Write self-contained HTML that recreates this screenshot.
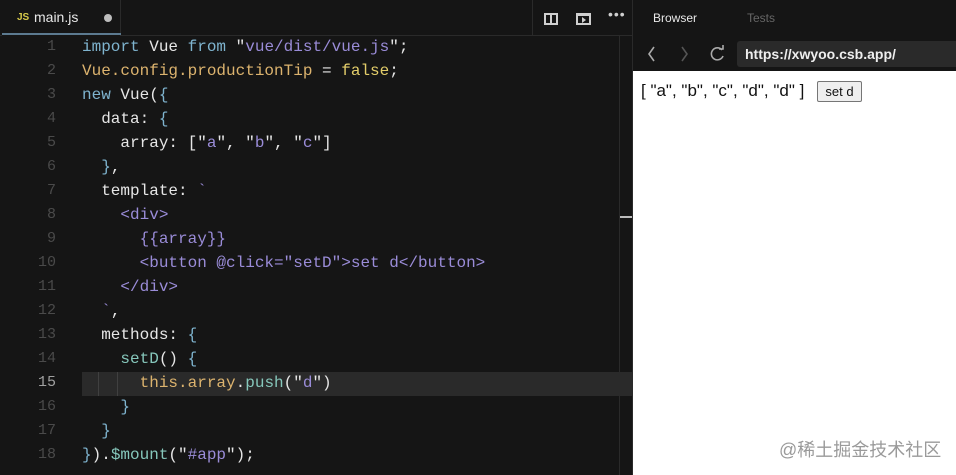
<!DOCTYPE html>
<html><head><meta charset="utf-8"><style>
*{margin:0;padding:0;box-sizing:border-box}
html,body{width:956px;height:475px;overflow:hidden}
body{background:#151515;position:relative;font-family:"Liberation Sans",sans-serif}
.abs{position:absolute}
.code{position:absolute;left:0;top:35px;font-family:"Liberation Mono","DejaVu Sans Mono",monospace;font-size:16px;line-height:24px;color:#e6e6e6;white-space:pre}
.ln{position:absolute;left:0;width:56px;text-align:right;color:#4a4a4a;font-size:15px}
.ln.cur{color:#a0a0a0}
.tx{position:absolute;left:82px}
.k{color:#7fb4cf}.s{color:#9a8cd8}.p{color:#dcb36e}.y{color:#e3cd6a}.f{color:#86c7bb}
</style></head><body>
<div class="abs" style="left:0;top:35px;width:633px;height:1px;background:#2a2a2a"></div>
<div class="abs" style="left:2px;top:0;width:119px;height:36px;background:#151515;border-right:1px solid #2a2a2a"></div>
<div class="abs" style="left:2px;top:33px;width:119px;height:2px;background:#5c7a90"></div>
<div class="abs" style="left:17px;top:12px;font-size:10px;font-weight:bold;color:#d6c94a">JS</div>
<div class="abs" style="left:34px;top:9px;font-size:14px;color:#e8e8e8">main.js</div>
<div class="abs" style="left:104px;top:14px;width:8px;height:8px;border-radius:50%;background:#bdbdbd"></div>
<div class="abs" style="left:532px;top:0;width:1px;height:35px;background:#2a2a2a"></div>
<div class="abs" style="left:544px;top:13px;width:14px;height:12px;border:2px solid #cfcfcf"></div>
<div class="abs" style="left:550px;top:13px;width:2px;height:12px;background:#cfcfcf"></div>
<div class="abs" style="left:576px;top:13px;width:15px;height:12px;border:2px solid #cfcfcf;border-top-width:3px"></div>
<div class="abs" style="left:582px;top:17px;width:0;height:0;border-left:4px solid #cfcfcf;border-top:3px solid transparent;border-bottom:3px solid transparent"></div>
<div class="abs" style="left:608px;top:6px;font-size:14px;color:#cfcfcf;letter-spacing:1px">•••</div>
<div class="abs" style="left:619px;top:36px;width:1px;height:439px;background:#2a2a2a"></div>
<div class="abs" style="left:620px;top:216px;width:12px;height:2px;background:#bbb"></div>
<div class="abs" style="left:82px;top:372px;width:551px;height:24px;background:#2a2a2a"></div>
<div class="abs" style="left:98px;top:372px;width:1px;height:24px;background:#404040"></div>
<div class="abs" style="left:117px;top:372px;width:1px;height:24px;background:#404040"></div>
<div class="code">
<div class="ln" style="top:0">1</div><div class="tx" style="top:0"><span class="k">import</span> Vue <span class="k">from</span> "<span class="s">vue/dist/vue.js</span>";</div>
<div class="ln" style="top:24px">2</div><div class="tx" style="top:24px"><span class="p">Vue.config.productionTip</span> = <span class="y">false</span>;</div>
<div class="ln" style="top:48px">3</div><div class="tx" style="top:48px"><span class="k">new</span> Vue(<span class="k">{</span></div>
<div class="ln" style="top:72px">4</div><div class="tx" style="top:72px">  data: <span class="k">{</span></div>
<div class="ln" style="top:96px">5</div><div class="tx" style="top:96px">    array: ["<span class="s">a</span>", "<span class="s">b</span>", "<span class="s">c</span>"]</div>
<div class="ln" style="top:120px">6</div><div class="tx" style="top:120px">  <span class="k">}</span>,</div>
<div class="ln" style="top:144px">7</div><div class="tx" style="top:144px">  template: <span class="s">`</span></div>
<div class="ln" style="top:168px">8</div><div class="tx s" style="top:168px">    &lt;div&gt;</div>
<div class="ln" style="top:192px">9</div><div class="tx s" style="top:192px">      {{array}}</div>
<div class="ln" style="top:216px">10</div><div class="tx s" style="top:216px">      &lt;button @click="setD"&gt;set d&lt;/button&gt;</div>
<div class="ln" style="top:240px">11</div><div class="tx s" style="top:240px">    &lt;/div&gt;</div>
<div class="ln" style="top:264px">12</div><div class="tx" style="top:264px">  <span class="s">`</span>,</div>
<div class="ln" style="top:288px">13</div><div class="tx" style="top:288px">  methods: <span class="k">{</span></div>
<div class="ln" style="top:312px">14</div><div class="tx" style="top:312px">    <span class="f">setD</span>() <span class="k">{</span></div>
<div class="ln cur" style="top:336px">15</div><div class="tx" style="top:336px">      <span class="p">this.array</span>.<span class="f">push</span>("<span class="s">d</span>")</div>
<div class="ln" style="top:360px">16</div><div class="tx" style="top:360px">    <span class="k">}</span></div>
<div class="ln" style="top:384px">17</div><div class="tx" style="top:384px">  <span class="k">}</span></div>
<div class="ln" style="top:408px">18</div><div class="tx" style="top:408px"><span class="k">}</span>).<span class="f">$mount</span>("<span class="s">#app</span>");</div>
</div>
<div class="abs" style="left:632px;top:0;width:1px;height:475px;background:#2a2a2a"></div>
<div class="abs" style="left:653px;top:11px;font-size:12px;color:#e8e8e8">Browser</div>
<div class="abs" style="left:747px;top:11px;font-size:12px;color:#666">Tests</div>
<svg class="abs" style="left:640px;top:40px" width="100" height="28" viewBox="0 0 100 28">
<path d="M14 7 L9 14 L14 21" stroke="#aaa" stroke-width="1.6" fill="none"/>
<path d="M42 7 L47 14 L42 21" stroke="#555" stroke-width="1.6" fill="none"/>
<path d="M82 10 A6 6 0 1 0 83 16" stroke="#aaa" stroke-width="1.6" fill="none"/>
<path d="M79 9 L83 9 L83 5" stroke="#aaa" stroke-width="1.6" fill="none"/>
</svg>
<div class="abs" style="left:737px;top:41px;width:219px;height:26px;background:#2a2a2a;border-radius:3px 0 0 3px"></div>
<div class="abs" style="left:745px;top:46px;font-size:14px;font-weight:bold;color:#eee">https://xwyoo.csb.app/</div>
<div class="abs" style="left:633px;top:71px;width:323px;height:404px;background:#fff"></div>
<div class="abs" style="left:641px;top:81px;font-size:17px;color:#111;white-space:pre">[ "a", "b", "c", "d", "d" ]</div>
<div class="abs" style="left:817px;top:81px;width:45px;height:21px;background:#efefef;border:1px solid #767676;border-radius:2px;font-size:13px;color:#111;text-align:center;line-height:19px">set d</div>
<div class="abs" style="left:779px;top:436px;font-size:18px;color:#9a9a9a;font-family:'Liberation Sans','Noto Sans CJK SC',sans-serif">@稀土掘金技术社区</div>
</body></html>
